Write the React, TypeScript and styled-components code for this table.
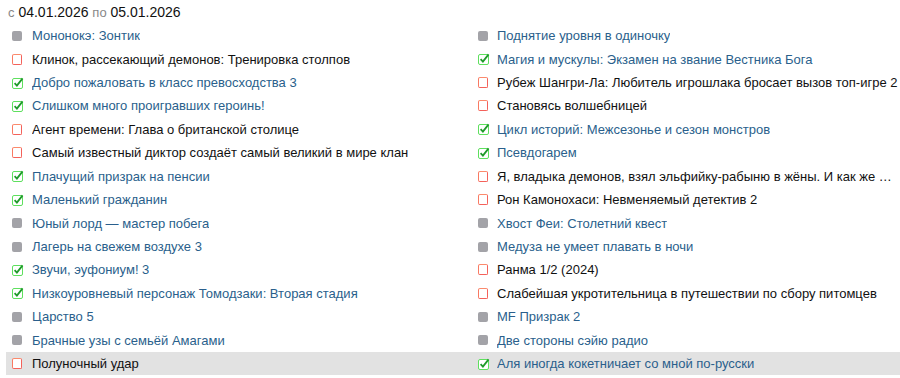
import { FC } from 'react';
import styled, { createGlobalStyle } from 'styled-components';

type Status = 'planned' | 'dropped' | 'watched';
type Item = { title: string; status: Status };

const left: Item[] = [
  { title: 'Мононокэ: Зонтик', status: 'planned' },
  { title: 'Клинок, рассекающий демонов: Тренировка столпов', status: 'dropped' },
  { title: 'Добро пожаловать в класс превосходства 3', status: 'watched' },
  { title: 'Слишком много проигравших героинь!', status: 'watched' },
  { title: 'Агент времени: Глава о британской столице', status: 'dropped' },
  { title: 'Самый известный диктор создаёт самый великий в мире клан', status: 'dropped' },
  { title: 'Плачущий призрак на пенсии', status: 'watched' },
  { title: 'Маленький гражданин', status: 'watched' },
  { title: 'Юный лорд — мастер побега', status: 'planned' },
  { title: 'Лагерь на свежем воздухе 3', status: 'planned' },
  { title: 'Звучи, эуфониум! 3', status: 'watched' },
  { title: 'Низкоуровневый персонаж Томодзаки: Вторая стадия', status: 'watched' },
  { title: 'Царство 5', status: 'planned' },
  { title: 'Брачные узы с семьёй Амагами', status: 'planned' },
  { title: 'Полуночный удар', status: 'dropped' },
];

const right: Item[] = [
  { title: 'Поднятие уровня в одиночку', status: 'planned' },
  { title: 'Магия и мускулы: Экзамен на звание Вестника Бога', status: 'watched' },
  { title: 'Рубеж Шангри-Ла: Любитель игрошлака бросает вызов топ-игре 2', status: 'dropped' },
  { title: 'Становясь волшебницей', status: 'dropped' },
  { title: 'Цикл историй: Межсезонье и сезон монстров', status: 'watched' },
  { title: 'Псевдогарем', status: 'watched' },
  { title: 'Я, владыка демонов, взял эльфийку-рабыню в жёны. И как же мне её любить?', status: 'dropped' },
  { title: 'Рон Камонохаси: Невменяемый детектив 2', status: 'dropped' },
  { title: 'Хвост Феи: Столетний квест', status: 'planned' },
  { title: 'Медуза не умеет плавать в ночи', status: 'planned' },
  { title: 'Ранма 1/2 (2024)', status: 'dropped' },
  { title: 'Слабейшая укротительница в путешествии по сбору питомцев', status: 'dropped' },
  { title: 'MF Призрак 2', status: 'planned' },
  { title: 'Две стороны сэйю радио', status: 'planned' },
  { title: 'Аля иногда кокетничает со мной по-русски', status: 'watched' },
];

const StatusIcon: FC<{ status: Status }> = ({ status }) => {
  if (status === 'planned') return <GreyBox />;
  if (status === 'dropped') return <RedBox />;
  return (
    <CheckIcon width="10" height="12" viewBox="0 0 10 12">
      <rect x="0.5" y="1.5" width="10" height="10" rx="1.5" fill="#fff" stroke="#5ee05e" />
      <path d="M2.6 6.2 L4.9 8.6 L10.6 1.4" fill="none" stroke="#1f9a2a" strokeWidth="1.8" />
    </CheckIcon>
  );
};

const App: FC = () => {
  const hovered = left.length - 1;
  return (
    <Page>
      <GlobalStyle />
      <Period>
        <Muted>с</Muted> <DateText>04.01.2026</DateText> <Muted>по</Muted>{' '}
        <DateText>05.01.2026</DateText>
      </Period>
      <Grid>
        {left.map((item, i) => (
          <Row key={i} $active={i === hovered}>
            <Cell>
              <StatusIcon status={item.status} />
              <Title $link={item.status !== 'dropped'}>{item.title}</Title>
            </Cell>
            <Cell $right>
              <StatusIcon status={right[i].status} />
              <Title $link={right[i].status !== 'dropped'}>{right[i].title}</Title>
            </Cell>
          </Row>
        ))}
      </Grid>
    </Page>
  );
};

export default App;

const GlobalStyle = createGlobalStyle`
  body {
    margin: 0;
    background: #fff;
    font-family: 'Liberation Sans', Arial, sans-serif;
  }
`;

const Page = styled.div`
  padding: 2px 0 0 6px;
`;

const Period = styled.div`
  padding-left: 2px;
  height: 22px;
  line-height: 20px;
  font-size: 14px;
  color: #111;
`;

const Muted = styled.span`
  font-size: 13px;
  color: #888;
`;

const DateText = styled.span`
  color: #111;
`;

const Grid = styled.div`
  display: flex;
  flex-direction: column;
`;

const Row = styled.div<{ $active?: boolean }>`
  display: grid;
  grid-template-columns: 444px 1fr;
  height: 23.43px;
  background: ${(p) => (p.$active ? '#e2e2e2' : 'transparent')};
`;

const Cell = styled.div<{ $right?: boolean }>`
  display: flex;
  align-items: center;
  gap: ${(p) => (p.$right ? '9px' : '10px')};
  padding-left: ${(p) => (p.$right ? '28px' : '6px')};
  padding-right: 2px;
  min-width: 0;
`;

const CheckIcon = styled.svg`
  flex-shrink: 0;
  overflow: visible;
`;

const GreyBox = styled.span`
  flex-shrink: 0;
  width: 10px;
  height: 10px;
  border-radius: 2px;
  background: #a3a3a8;
`;

const RedBox = styled.span`
  flex-shrink: 0;
  box-sizing: border-box;
  width: 10px;
  height: 11px;
  border: 1.5px solid #f4615a;
  border-top-color: #fb8a6c;
  border-left-color: #f97a62;
  border-radius: 2px;
  background: #fff;
`;

const Title = styled.span<{ $link?: boolean }>`
  font-size: 13px;
  color: ${(p) => (p.$link ? '#2a5f8c' : '#111')};
  white-space: nowrap;
  overflow: hidden;
  text-overflow: ellipsis;
  min-width: 0;
`;
